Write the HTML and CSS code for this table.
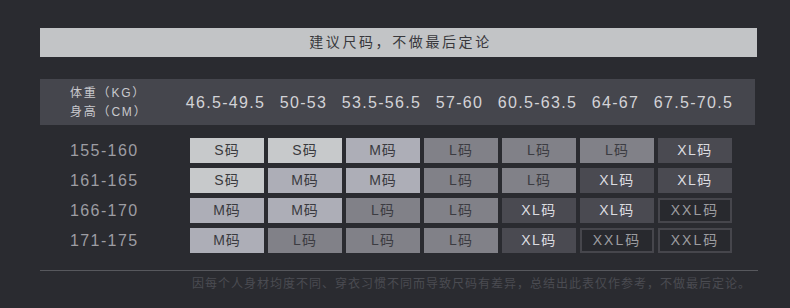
FILE: index.html
```html
<!DOCTYPE html>
<html lang="zh-CN">
<head>
<meta charset="utf-8">
<link rel="stylesheet" href="styles.css">
</head>
<body>
<div class="page">
  <div class="notice">建议尺码，不做最后定论</div>
  <div class="head grid">
    <div class="head-label"><span>体重（KG）</span><span>身高（CM）</span></div>
    <div class="w"><span>46.5-49.5</span></div>
    <div class="w"><span>50-53</span></div>
    <div class="w"><span>53.5-56.5</span></div>
    <div class="w"><span>57-60</span></div>
    <div class="w"><span>60.5-63.5</span></div>
    <div class="w"><span>64-67</span></div>
    <div class="w"><span>67.5-70.5</span></div>
  </div>
  <div class="body grid">
    <div class="h">155-160</div>
    <div class="c s">S码</div><div class="c s">S码</div><div class="c m">M码</div><div class="c l">L码</div><div class="c l">L码</div><div class="c l">L码</div><div class="c xl">XL码</div>
    <div class="h">161-165</div>
    <div class="c s">S码</div><div class="c m">M码</div><div class="c m">M码</div><div class="c l">L码</div><div class="c l">L码</div><div class="c xl">XL码</div><div class="c xl">XL码</div>
    <div class="h">166-170</div>
    <div class="c m">M码</div><div class="c m">M码</div><div class="c l">L码</div><div class="c l">L码</div><div class="c xl">XL码</div><div class="c xl">XL码</div><div class="c xxl">XXL码</div>
    <div class="h">171-175</div>
    <div class="c m">M码</div><div class="c l">L码</div><div class="c l">L码</div><div class="c l">L码</div><div class="c xl">XL码</div><div class="c xxl">XXL码</div><div class="c xxl">XXL码</div>
  </div>
  <div class="rule"></div>
  <div class="foot">因每个人身材均度不同、穿衣习惯不同而导致尺码有差异，总结出此表仅作参考，不做最后定论。</div>
</div>
</body>
</html>
```
FILE: styles.css
```css
html, body {
  margin: 0;
  padding: 0;
  background: #2a2b30;
}
body {
  width: 790px;
  height: 308px;
  overflow: hidden;
  font-family: "Liberation Sans", "Noto Sans CJK SC", sans-serif;
}
.page {
  padding: 28px 0 0 40px;
  width: 718px;
}
.notice {
  width: 717px;
  height: 29px;
  background: #c2c4c6;
  color: #38383c;
  font-size: 14px;
  letter-spacing: 2.6px;
  line-height: 29px;
  text-align: center;
  padding-left: 4px;
  box-sizing: border-box;
}
.grid {
  display: grid;
  grid-template-columns: 146px repeat(7, 74px);
  column-gap: 4px;
}
.head {
  margin-top: 22px;
  width: 715px;
  height: 46px;
  background: #45464d;
  align-items: center;
}
.head-label {
  display: flex;
  flex-direction: column;
  padding-left: 30px;
  color: #c9c9cd;
  font-size: 12px;
  line-height: 19px;
  letter-spacing: 1.8px;
  padding-top: 1px;
  white-space: nowrap;
}
.w {
  display: flex;
  justify-content: center;
  white-space: nowrap;
  color: #d3d3d7;
  font-size: 16px;
  letter-spacing: 1.3px;
  padding-top: 2px;
  margin-left: -3px;
}
.body {
  margin-top: 13px;
  row-gap: 5px;
}
.h {
  padding-left: 30px;
  color: #9d9da3;
  font-size: 16px;
  letter-spacing: 1.4px;
  line-height: 25px;
}
.c {
  height: 25px;
  line-height: 25px;
  text-align: center;
  font-size: 14px;
  letter-spacing: 1px;
  box-sizing: border-box;
}
.s { background: #c7c9cb; color: #3a3a3e; }
.m { background: #adaeb7; color: #3a3a40; }
.l { background: #818188; color: #3c3c42; }
.xl { background: #4a4a51; color: #dcdce0; letter-spacing: 1.5px; }
.xxl {
  background: #28292e;
  border: 2px solid #46464c;
  line-height: 21px;
  color: #9c9ca0;
  letter-spacing: 2px;
}
.rule {
  margin-top: 17px;
  width: 718px;
  height: 1px;
  background: #57585d;
}
.foot {
  margin: 5px 0 0 152px;
  color: #4b4c52;
  font-size: 12px;
  letter-spacing: 1px;
  line-height: 16px;
  white-space: nowrap;
}
```
